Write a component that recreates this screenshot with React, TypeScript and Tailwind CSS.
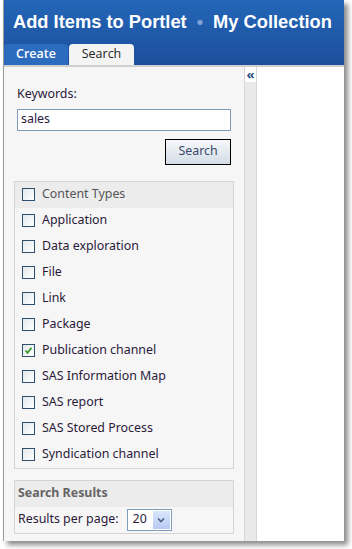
import React from "react";

const types = [
  { label: "Application", checked: false },
  { label: "Data exploration", checked: false },
  { label: "File", checked: false },
  { label: "Link", checked: false },
  { label: "Package", checked: false },
  { label: "Publication channel", checked: true },
  { label: "SAS Information Map", checked: false },
  { label: "SAS report", checked: false },
  { label: "SAS Stored Process", checked: false },
  { label: "Syndication channel", checked: false },
];

function Box({ checked }: { checked?: boolean }) {
  return (
    <span className="flex h-[13px] w-[13px] shrink-0 items-center justify-center border border-[#2f4f6f] bg-gradient-to-br from-[#e4e7ea] to-white">
      {checked && (
        <svg width="9" height="9" viewBox="0 0 9 9">
          <path d="M1.5 4.5 L3.5 6.8 L7.5 1.8" fill="none" stroke="#3a9a2a" strokeWidth="1.8" />
        </svg>
      )}
    </span>
  );
}

export default function App() {
  return (
    <div className="h-[549px] w-[352px] bg-white font-['Noto_Sans',sans-serif] text-[12.4px] text-[#2a1a3a]">
      <div className="ml-[3px] flex h-[541px] w-[341px] flex-col border-l border-[#9a9a9a] shadow-[4px_4px_5px_rgba(0,0,0,0.45)]">
        {/* header */}
        <div className="flex h-[65px] flex-col bg-gradient-to-b from-[#2466b8] to-[#1c4f9c]">
          <div className="flex h-[44px] items-center gap-[10px] pl-[9px] font-['Liberation_Sans',sans-serif] text-[18.3px] font-bold text-white">
            <span>Add Items to Portlet</span>
            <span className="text-[#7fa4d4]">•</span>
            <span>My Collection</span>
          </div>
          <div className="flex flex-1 items-end">
            <div className="flex h-[21px] w-[64px] items-center justify-center rounded-t-[4px] bg-[#2c6cbf] font-['Open_Sans',sans-serif] text-[12.5px] font-semibold text-white">
              Create
            </div>
            <div className="ml-[1px] flex h-[21px] w-[65px] items-center justify-center rounded-t-[4px] bg-[#f4f4f4] font-['Open_Sans',sans-serif] text-[12.5px] text-[#222]">
              Search
            </div>
          </div>
        </div>
        <div className="h-[2px] bg-[#cfcfcf]" />

        <div className="flex flex-1">
          {/* left panel */}
          <div className="flex w-[240px] flex-col bg-[#f6f6f6] px-[10px] pt-[18px]">
            <div className="pl-[3px]">Keywords:</div>
            <div className="mx-[3px] mt-[5px] flex h-[22px] items-center border border-[#7f9db9] bg-white px-[3px]">sales</div>
            <div className="mt-[8px] flex justify-end pr-[3px]">
              <button className="h-[26px] w-[66px] border border-black bg-gradient-to-b from-[#f6f8fa] to-[#d3dce6] text-[12.4px] text-[#3a4a6a]">
                Search
              </button>
            </div>

            <div className="mt-[16px] flex flex-col border border-[#d4d4d4]">
              <div className="flex h-[26px] items-center gap-[7px] bg-[#ececec] pl-[7px] text-[#555]">
                <Box />
                <span>Content Types</span>
              </div>
              {types.map((t) => (
                <div key={t.label} className="flex h-[26px] items-center gap-[7px] pl-[7px]">
                  <Box checked={t.checked} />
                  <span>{t.label}</span>
                </div>
              ))}
            </div>

            <div className="mt-[11px] flex h-[54px] flex-col border border-[#d4d4d4]">
              <div className="flex h-[26px] items-center bg-[#ececec] pl-[3px] font-bold text-[#666]">Search Results</div>
              <div className="flex flex-1 items-center gap-[8px] pl-[3px]">
                <span>Results per page:</span>
                <div className="flex h-[22px] w-[45px] items-center border border-[#7f9db9] bg-white pl-[5px]">
                  <span className="flex-1">20</span>
                  <span className="mr-[1px] flex h-[18px] w-[17px] items-center justify-center bg-gradient-to-b from-[#dbe6fb] to-[#b6cbf3]">
                    <svg width="8" height="6" viewBox="0 0 8 6">
                      <path d="M1 1.5 L4 4.5 L7 1.5" fill="none" stroke="#4d6185" strokeWidth="1.6" />
                    </svg>
                  </span>
                </div>
              </div>
            </div>
          </div>

          {/* divider */}
          <div className="flex w-[13px] flex-col border-l border-r border-[#d6d6d6] bg-[#e9e9e9]">
            <div className="flex h-[15px] items-center justify-center bg-white text-[13px] font-bold leading-none text-[#2d4f7f]">«</div>
          </div>

          <div className="flex-1 bg-white" />
        </div>
      </div>
    </div>
  );
}
